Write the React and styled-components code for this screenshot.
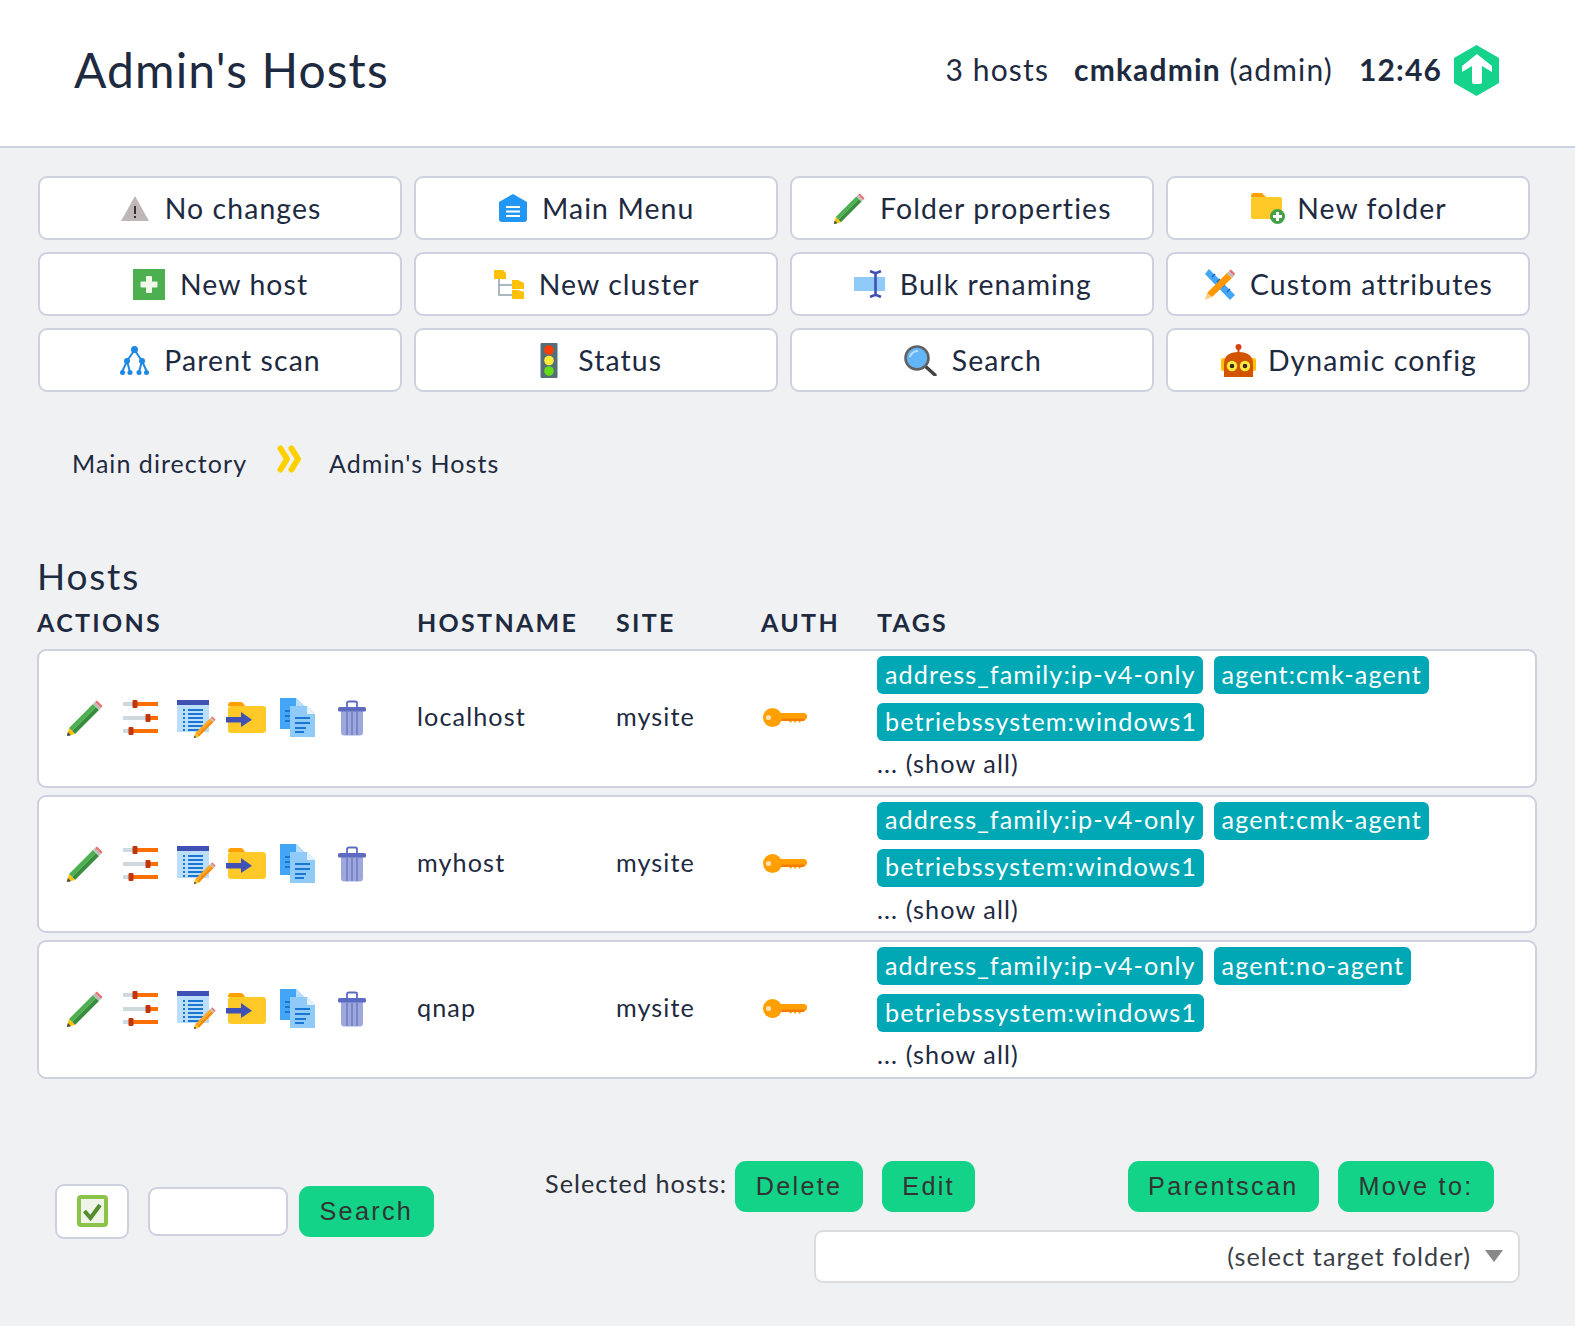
import React from 'react'
import styled, { createGlobalStyle } from 'styled-components'

const GlobalStyle = createGlobalStyle`
  html, body {
    margin: 0;
    padding: 0;
    background: #f0f1f3;
    color: #1e2a3f;
    font-family: Lato, "Open Sans", sans-serif;
  }
  * { box-sizing: border-box; }
`

const PencilShape = ({ light = '#4caf50', dark = '#388e3c' }) => (
  <g>
    <polygon points="2,28 26,4 29,7 5,31" fill={light} />
    <polygon points="5,31 29,7 32,10 8,34" fill={dark} />
    <polygon points="26,4 28,2 34,8 32,10" fill="#bdbdbd" />
    <polygon points="28,2 30,0.5 35.5,6 34,8" fill="#e57373" />
    <polygon points="2,28 8,34 0,36" fill="#ffc107" />
    <polygon points="0.8,32 4,35.2 0,36" fill="#37474f" />
  </g>
)

const WarningIcon = () => (
  <svg width="30" height="27" viewBox="0 0 30 27">
    <polygon points="15,1 29,26 1,26" fill="#bfb7b7" />
    <rect x="14" y="11" width="2" height="8" fill="#333" />
    <rect x="14" y="21" width="2" height="2" fill="#333" />
  </svg>
)

const MenuIcon = () => (
  <svg width="28" height="28" viewBox="0 0 28 28">
    <path d="M14 0 L28 8 V25 Q28 28 25 28 H3 Q0 28 0 25 V8 Z" fill="#2196f3" />
    <rect x="7" y="12" width="14" height="2" fill="#fff" />
    <rect x="7" y="16.5" width="14" height="2" fill="#fff" />
    <rect x="7" y="21" width="14" height="2" fill="#fff" />
  </svg>
)

const PencilIcon = () => (
  <svg width="31" height="31" viewBox="0 0 36 36"><PencilShape /></svg>
)

const NewFolderIcon = () => (
  <TightIcon width="34" height="31" viewBox="0 0 34 31">
    <path d="M0 3 Q0 0 3 0 H11 L15 4 H0 Z" fill="#ffa000" />
    <rect x="0" y="4" width="31" height="22" rx="2" fill="#ffca28" />
    <circle cx="26.5" cy="23.5" r="7.5" fill="#43a047" />
    <rect x="25" y="19" width="3" height="9" fill="#fff" />
    <rect x="22" y="22" width="9" height="3" fill="#fff" />
  </TightIcon>
)

const NewHostIcon = () => (
  <svg width="32" height="31" viewBox="0 0 32 31">
    <rect width="32" height="31" fill="#4caf50" />
    <rect x="13" y="7" width="6" height="17" rx="1" fill="#f1f8e9" />
    <rect x="7.5" y="12.5" width="17" height="6" rx="1" fill="#f1f8e9" />
  </svg>
)

const ClusterIcon = () => (
  <svg width="30" height="29" viewBox="0 0 30 29">
    <path d="M5 8 V25 H18 M5 15 H18" fill="none" stroke="#90a4ae" strokeWidth="1.5" />
    <path d="M0 0 H9 L12 3 V9 H0 Z" fill="#ffc107" />
    <path d="M18 10 H24 L30 13 V19 H18 Z" fill="#ffc107" />
    <path d="M18 20 H24 L30 22 V29 H18 Z" fill="#ffc107" />
  </svg>
)

const RenameIcon = () => (
  <svg width="31" height="28" viewBox="0 0 31 28">
    <rect x="0" y="7" width="31" height="14" fill="#90caf9" />
    <path d="M16 1 Q20 3 21.5 3 Q23 3 27 1 M21.5 3 V25 M16 27 Q20 25 21.5 25 Q23 25 27 27" fill="none" stroke="#3f51b5" strokeWidth="2.6" />
  </svg>
)

const AttributesIcon = () => (
  <svg width="30" height="31" viewBox="0 0 30 31">
    <polygon points="4,0 30,26 25,31 0,5" fill="#42a5f5" />
    <path d="M7 8 L10 5 M12 13 L15 10 M17 18 L20 15 M22 23 L25 20" stroke="#1565c0" strokeWidth="1.4" />
    <polygon points="22,4 27,9 7,28 2,24" fill="#ff9800" />
    <polygon points="22,4 24,2 29,7 27,9" fill="#bdbdbd" />
    <polygon points="24,2 26,0.5 30,4.5 29,7" fill="#e57373" />
    <polygon points="2,24 7,28 0,31" fill="#ffcc80" />
  </svg>
)

const TreeIcon = () => (
  <svg width="29" height="29" viewBox="0 0 29 29">
    <path d="M14.5 4 L7 15 L2 26 M7 15 L10 26 M14.5 4 L22 15 L19 26 M22 15 L27 26" fill="none" stroke="#1e88e5" strokeWidth="2" />
    <circle cx="14.5" cy="3.5" r="3.5" fill="#1e88e5" />
    <circle cx="7" cy="15" r="3" fill="#1e88e5" />
    <circle cx="22" cy="15" r="3" fill="#1e88e5" />
    <circle cx="2.5" cy="26.5" r="2.5" fill="#1e88e5" />
    <circle cx="10" cy="26.5" r="2.5" fill="#1e88e5" />
    <circle cx="19" cy="26.5" r="2.5" fill="#1e88e5" />
    <circle cx="26.5" cy="26.5" r="2.5" fill="#1e88e5" />
  </svg>
)

const TrafficIcon = () => (
  <svg width="32" height="35" viewBox="-9.5 0 32 35">
    <rect width="17" height="35" rx="1" fill="#546e7a" />
    <circle cx="8.5" cy="7" r="4.8" fill="#ff3d00" />
    <circle cx="8.5" cy="17.5" r="4.8" fill="#ffeb3b" />
    <circle cx="8.5" cy="28" r="4.8" fill="#64dd17" />
  </svg>
)

const SearchIcon = () => (
  <svg width="33" height="31" viewBox="0 0 33 31">
    <path d="M21 21 L31 30" stroke="#424242" strokeWidth="3.4" strokeLinecap="round" />
    <circle cx="13" cy="13" r="11.5" fill="#64b5f6" stroke="#616161" strokeWidth="2.6" />
    <path d="M6 12 Q8 6 14 6" fill="none" stroke="#bbdefb" strokeWidth="2" />
  </svg>
)

const RobotIcon = () => (
  <TightIcon width="35" height="33" viewBox="0 0 35 33">
    <circle cx="17.5" cy="3" r="3" fill="#d84315" />
    <rect x="16.5" y="4" width="2" height="6" fill="#d84315" />
    <rect x="0" y="14" width="35" height="13" rx="2" fill="#ffc107" />
    <path d="M3 33 V20 Q3 8 17.5 8 Q32 8 32 20 V33 Z" fill="#d35400" />
    <circle cx="11" cy="22" r="5.2" fill="#ffeb3b" />
    <circle cx="24" cy="22" r="5.2" fill="#ffeb3b" />
    <circle cx="11" cy="22" r="2.3" fill="#3e2723" />
    <circle cx="24" cy="22" r="2.3" fill="#3e2723" />
  </TightIcon>
)

const HexLogo = () => (
  <svg width="45" height="51" viewBox="0 0 45 51">
    <polygon points="22.5,0 45,13 45,38 22.5,51 0,38 0,13" fill="#15d38b" />
    <path d="M23 9 L38 21 V27 L28 21 V37 Q28 39 26 39 H20 Q18 39 18 37 V21 L8 27 V21 Z" fill="#fff" />
  </svg>
)

const EditAction = () => (
  <ActionIcon viewBox="0 0 54 40">
    <g transform="translate(9 2)"><PencilShape /></g>
  </ActionIcon>
)

const SlidersAction = () => (
  <ActionIcon viewBox="0 0 54 40">
    {[[6, 23], [20, 36], [33, 19]].map(([y, t]) => (
      <g key={y}>
        <rect x="11" y={y - 2} width={t - 11} height="4" fill="#cfd8dc" />
        <rect x={t} y={y - 2} width={46 - t} height="4" fill="#ff6f00" />
        <rect x={t - 2.5} y={y - 4} width="5" height="8" rx="1" fill="#bf360c" />
      </g>
    ))}
  </ActionIcon>
)

const RulesAction = () => (
  <ActionIcon viewBox="0 0 54 40">
    <rect x="11" y="2" width="32" height="32" fill="#bbdefb" />
    <rect x="11" y="2" width="32" height="5" fill="#3f51b5" />
    {[12, 16, 20, 24, 28, 32].map(y => (
      <g key={y} fill="#1976d2">
        <rect x="17" y={y - 1} width="2" height="2" />
        <rect x="22" y={y - 1} width="15" height="2" />
      </g>
    ))}
    <g transform="translate(28 18) scale(0.61)">
      <PencilShape light="#ffa726" dark="#fb8c00" />
    </g>
  </ActionIcon>
)

const MoveAction = () => (
  <ActionIcon viewBox="0 0 54 40">
    <path d="M8 8 Q8 4 11 4 H21 Q23 4 25 8 Z" fill="#ffa000" />
    <rect x="8" y="8" width="38" height="27" rx="3" fill="#ffca28" />
    <rect x="6" y="19" width="16" height="5.5" fill="#3f51b5" />
    <polygon points="21,14 32,21.7 21,29" fill="#3f51b5" />
  </ActionIcon>
)

const CloneAction = () => (
  <ActionIcon viewBox="0 0 54 40">
    <path d="M6 0 H22 L30 8 V31 H6 Z" fill="#42a5f5" />
    <polygon points="22,0 30,8 22,8" fill="#bbdefb" />
    <g fill="#1976d2">
      <rect x="11" y="12" width="6" height="2" />
      <rect x="11" y="17" width="6" height="2" />
      <rect x="11" y="22" width="6" height="2" />
    </g>
    <path d="M16 8 H33 L41 16 V39 H16 Z" fill="#90caf9" />
    <polygon points="33,8 41,16 33,16" fill="#e3f2fd" />
    <g fill="#1976d2">
      <rect x="21" y="19" width="15" height="2" />
      <rect x="21" y="24" width="15" height="2" />
      <rect x="21" y="29" width="11" height="2" />
      <rect x="21" y="33" width="9" height="2" />
    </g>
  </ActionIcon>
)

const TrashAction = () => (
  <ActionIcon viewBox="0 0 54 40">
    <path d="M19 9 V5 Q19 3.5 21 3.5 H27 Q29 3.5 29 5 V9" fill="none" stroke="#5c6bc0" strokeWidth="1.8" />
    <path d="M13 13 H35 V34 Q35 37.5 32 37.5 H16 Q13 37.5 13 34 Z" fill="#9fa8da" />
    <rect x="10" y="9" width="28" height="4.5" rx="1.5" fill="#5c6bc0" />
    <g fill="#7986cb">
      <rect x="18" y="14" width="2" height="23" />
      <rect x="23" y="14" width="2" height="23" />
      <rect x="28" y="14" width="2" height="23" />
    </g>
  </ActionIcon>
)

const KeyIcon = () => (
  <svg width="44" height="20" viewBox="0 0 44 20">
    <path d="M16 5 H42 L44 7 V10 L41 13 H38 L36.8 15 L35 13 H33.5 L32.3 15 L30.5 13 H29 L27.8 15 L26 13 H16 Z" fill="#ffa000" />
    <rect x="18" y="10.5" width="23" height="2.5" fill="#f57c00" />
    <circle cx="9.5" cy="9.5" r="9.5" fill="#ffa000" />
    <circle cx="5.5" cy="9.5" r="2.6" fill="#ffe0b2" />
  </svg>
)

const navItems = [
  [WarningIcon, 'No changes'],
  [MenuIcon, 'Main Menu'],
  [PencilIcon, 'Folder properties'],
  [NewFolderIcon, 'New folder'],
  [NewHostIcon, 'New host'],
  [ClusterIcon, 'New cluster'],
  [RenameIcon, 'Bulk renaming'],
  [AttributesIcon, 'Custom attributes'],
  [TreeIcon, 'Parent scan'],
  [TrafficIcon, 'Status'],
  [SearchIcon, 'Search'],
  [RobotIcon, 'Dynamic config'],
]

const hosts = [
  { name: 'localhost', agent: 'agent:cmk-agent' },
  { name: 'myhost', agent: 'agent:cmk-agent' },
  { name: 'qnap', agent: 'agent:no-agent' },
]

const App = () => (
  <Page>
    <GlobalStyle />
    <Header>
      <Title>Admin's Hosts</Title>
      <HeaderInfo>
        <HostCount>3 hosts</HostCount>
        <User><b>cmkadmin</b> (admin)</User>
        <Clock>12:46</Clock>
        <HexLogo />
      </HeaderInfo>
    </Header>

    <NavGrid>
      {navItems.map(([Icon, label]) => (
        <NavButton key={label}>
          <Icon />
          <span>{label}</span>
        </NavButton>
      ))}
    </NavGrid>

    <Breadcrumb>
      <span>Main directory</span>
      <Chevrons width="26" height="28" viewBox="0 0 26 28">
        <path d="M3.5 3.5 L10 14 L3.5 24.5 M14.5 3.5 L21 14 L14.5 24.5" fill="none" stroke="#ffd000" strokeWidth="6" strokeLinejoin="round" strokeLinecap="round" />
      </Chevrons>
      <span>Admin's Hosts</span>
    </Breadcrumb>

    <SectionTitle>Hosts</SectionTitle>
    <TableHead>
      <span>Actions</span>
      <span>Hostname</span>
      <span>Site</span>
      <span>Auth</span>
      <span>Tags</span>
    </TableHead>

    <Rows>
      {hosts.map(host => (
        <HostRow key={host.name}>
          <Actions>
            <EditAction />
            <SlidersAction />
            <RulesAction />
            <MoveAction />
            <CloneAction />
            <TrashAction />
          </Actions>
          <RowText>{host.name}</RowText>
          <RowText>mysite</RowText>
          <KeyCell><KeyIcon /></KeyCell>
          <TagCell>
            <TagLine>
              <Tag>address_family:ip-v4-only</Tag>
              <Tag>{host.agent}</Tag>
            </TagLine>
            <TagLine>
              <Tag>betriebssystem:windows1</Tag>
            </TagLine>
            <ShowAll>... (show all)</ShowAll>
          </TagCell>
        </HostRow>
      ))}
    </Rows>

    <Footer>
      <SearchGroup>
        <CheckToggle>
          <svg width="31" height="32" viewBox="0 0 31 32">
            <rect x="2" y="2" width="27" height="28" rx="2" fill="#eff4e8" stroke="#8bc34a" strokeWidth="4" />
            <path d="M7.5 16 L13.5 23 L23 10" fill="none" stroke="#558b2f" strokeWidth="4" />
          </svg>
        </CheckToggle>
        <SearchInput />
        <GreenButton>Search</GreenButton>
      </SearchGroup>
      <BulkGroup>
        <BulkRow>
          <BulkLabel>Selected hosts:</BulkLabel>
          <GreenButton>Delete</GreenButton>
          <GreenButton>Edit</GreenButton>
          <Spacer />
          <GreenButton>Parentscan</GreenButton>
          <GreenButton>Move to:</GreenButton>
        </BulkRow>
        <FolderSelect>
          <span>(select target folder)</span>
          <svg width="18" height="12" viewBox="0 0 18 12">
            <polygon points="0,0 18,0 9,12" fill="#888" />
          </svg>
        </FolderSelect>
      </BulkGroup>
    </Footer>
  </Page>
)

export default App

/* STYLES */

const Page = styled.div`
  min-height: 1326px;
  overflow: hidden;
`
const Header = styled.header`
  height: 148px;
  padding: 0 76px 5px 74px;
  background: #fff;
  border-bottom: 2px solid #cfd3e0;
  display: flex;
  align-items: center;
  justify-content: space-between;
`
const Title = styled.h1`
  margin: 0 0 2px;
  font-size: 48px;
  font-weight: 400;
  letter-spacing: 1.1px;
`
const HeaderInfo = styled.div`
  display: flex;
  align-items: center;
  font-size: 30px;
  letter-spacing: 1.15px;
  span { padding-bottom: 4px; }
`
const HostCount = styled.span`
  margin-right: 25px;
`
const User = styled.span`
  margin-right: 26px;
  b { font-weight: 700; }
`
const Clock = styled.span`
  margin-right: 12px;
  font-weight: 700;
`
const TightIcon = styled.svg`
  margin-right: -3px;
`
const NavGrid = styled.nav`
  margin-top: 28px;
  padding: 0 45px 0 37.5px;
  display: grid;
  grid-template-columns: repeat(4, 1fr);
  grid-auto-rows: 64px;
  gap: 12px;
`
const NavButton = styled.div`
  padding-left: 2px;
  display: flex;
  align-items: center;
  justify-content: center;
  gap: 15px;
  background: #fff;
  border: 2px solid #ced0e0;
  border-radius: 9px;
  font-size: 28.4px;
  letter-spacing: 1.1px;
`
const Breadcrumb = styled.div`
  margin-top: 56px;
  padding-left: 72px;
  display: flex;
  align-items: center;
  gap: 28px;
  font-size: 25px;
  letter-spacing: 1.05px;
`
const Chevrons = styled.svg`
  margin: -8px -2px 0 2px;
`
const SectionTitle = styled.h2`
  margin: 75px 0 0 37px;
  font-size: 37px;
  font-weight: 400;
  letter-spacing: 1.8px;
`
const TableHead = styled.div`
  margin: 9px 38px 0 37px;
  display: grid;
  grid-template-columns: 380px 199px 145px 116px 1fr;
  font-size: 25px;
  font-weight: 700;
  letter-spacing: 2.3px;
  text-transform: uppercase;
`
const Rows = styled.div`
  margin: 12px 38px 0 37px;
  display: flex;
  flex-direction: column;
  gap: 7px;
`
const HostRow = styled.div`
  height: 138.6px;
  display: grid;
  grid-template-columns: 378px 199px 145px 116px 1fr;
  align-items: center;
  background: #fff;
  border: 2px solid #ced0e0;
  border-radius: 9px;
  font-size: 25.2px;
  letter-spacing: 1.1px;
`
const RowText = styled.span`
  padding-bottom: 4px;
`
const Actions = styled.div`
  padding-left: 19px;
  display: flex;
`
const ActionIcon = styled.svg`
  width: 54px;
  height: 40px;
  flex: none;
`
const KeyCell = styled.div`
  padding-left: 2px;
  display: flex;
`
const TagCell = styled.div`
  display: flex;
  flex-direction: column;
  align-items: flex-start;
`
const TagLine = styled.div`
  display: flex;
  gap: 11px;
  margin-bottom: 9px;
`
const Tag = styled.span`
  height: 38px;
  padding: 0 7px 3px 8px;
  display: flex;
  align-items: center;
  background: #00a8b5;
  border-radius: 6px;
  color: #fff;
  font-size: 25.2px;
  letter-spacing: 1.1px;
`
const ShowAll = styled.span`
  margin-top: -4px;
  line-height: 34px;
`
const Footer = styled.div`
  margin-top: 82px;
  padding: 0 55px;
  display: flex;
  justify-content: space-between;
  align-items: flex-start;
`
const SearchGroup = styled.div`
  margin-top: 23px;
  display: flex;
  align-items: center;
`
const CheckToggle = styled.div`
  width: 74px;
  height: 55px;
  margin-right: 19px;
  display: flex;
  align-items: center;
  justify-content: center;
  background: #fff;
  border: 2px solid #ced0e0;
  border-radius: 9px;
`
const SearchInput = styled.input`
  width: 140px;
  height: 49px;
  margin-right: 11px;
  background: #fff;
  border: 2px solid #ced0e0;
  border-radius: 9px;
`
const GreenButton = styled.button`
  height: 51px;
  padding: 0 20.5px;
  background: #13d389;
  border: 0;
  border-radius: 11px;
  color: #333;
  font-family: "Liberation Sans", sans-serif;
  font-size: 25.2px;
  letter-spacing: 2.3px;
`
const BulkGroup = styled.div`
  width: 975px;
  display: flex;
  flex-direction: column;
  align-items: flex-end;
`
const BulkRow = styled.div`
  width: 100%;
  display: flex;
  gap: 19px;
  padding-right: 26px;
`
const BulkLabel = styled.span`
  margin-right: -11px;
  padding-top: 7px;
  font-size: 25.2px;
  letter-spacing: 1.05px;
  color: #2b2f3a;
`
const Spacer = styled.span`
  flex: 1;
`
const FolderSelect = styled.div`
  width: 706px;
  height: 53px;
  margin-top: 18px;
  padding: 0 15px 0 0;
  display: flex;
  align-items: center;
  justify-content: flex-end;
  gap: 14px;
  background: #fff;
  border: 2px solid #dcdcdc;
  border-radius: 9px;
  color: #3a3f48;
  font-size: 25.2px;
  letter-spacing: 1.05px;
`
